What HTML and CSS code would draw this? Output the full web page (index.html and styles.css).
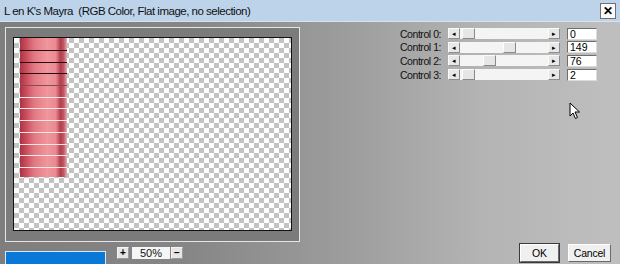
FILE: index.html
```html
<!DOCTYPE html>
<html lang="en">
<head>
    <meta charset="UTF-8">
    <title>L en K's Mayra</title>
    <link rel="stylesheet" href="styles.css">
</head>
<body>
    <div class="window">
        <div class="titlebar">
            <span class="title">L en K's Mayra&nbsp; (RGB Color, Flat image, no selection)</span>
            <span class="close">&#x2715;</span>
        </div>
        <div class="content">
            <div class="left">
                <div class="frame">
                    <div class="canvas">
                        <div class="tube">
                            <div class="band dark"></div>
                            <div class="band dark"></div>
                            <div class="band dark"></div>
                            <div class="band mid"></div>
                            <div class="band"></div>
                            <div class="band"></div>
                            <div class="band"></div>
                            <div class="band"></div>
                            <div class="band"></div>
                            <div class="band"></div>
                            <div class="band"></div>
                        </div>
                    </div>
                </div>
                <div class="bottom">
                    <div class="progress"></div>
                    <div class="zoom">
                        <span class="zbtn">+</span>
                        <span class="zval">50%</span>
                        <span class="zbtn">&minus;</span>
                    </div>
                </div>
            </div>
            <div class="right">
                <div class="controls">
                    <label>Control 0:</label>
                    <div class="scroll"><span class="arrow">&#9666;</span><span class="track"><span class="thumb" style="left: 2px"></span></span><span class="arrow">&#9656;</span></div>
                    <span class="field">0</span>

                    <label>Control 1:</label>
                    <div class="scroll"><span class="arrow">&#9666;</span><span class="track"><span class="thumb" style="left: 43px"></span></span><span class="arrow">&#9656;</span></div>
                    <span class="field">149</span>

                    <label>Control 2:</label>
                    <div class="scroll"><span class="arrow">&#9666;</span><span class="track"><span class="thumb" style="left: 23px"></span></span><span class="arrow">&#9656;</span></div>
                    <span class="field">76</span>

                    <label>Control 3:</label>
                    <div class="scroll"><span class="arrow">&#9666;</span><span class="track"><span class="thumb" style="left: 2px"></span></span><span class="arrow">&#9656;</span></div>
                    <span class="field">2</span>
                </div>
                <div class="buttons">
                    <button class="default">OK</button>
                    <button>Cancel</button>
                </div>
            </div>
            <svg class="cursor" width="12" height="18" viewBox="0 0 12 18">
                <path d="M1 1 L1 14 L4 11 L6.5 16.5 L8.5 15.5 L6 10 L10.5 10 Z" fill="#fff" stroke="#000" stroke-width="1"/>
            </svg>
        </div>
    </div>
</body>
</html>
```

FILE: styles.css
```css
body {
    margin: 0;
    padding: 0;
    font-family: "Liberation Sans", Arial, sans-serif;
    background: #a0a0a0;
}
.window {
    width: 620px;
    height: 264px;
    overflow: hidden;
    position: relative;
}
.titlebar {
    height: 22px;
    background: #bdd3ea;
    border-bottom: 1px solid #d6e4f2;
    box-sizing: border-box;
    display: flex;
    align-items: center;
    justify-content: space-between;
    padding: 0 4px 0 4px;
}
.title {
    font-size: 11.5px;
    color: #111;
    letter-spacing: -0.5px;
}
.close {
    width: 16px;
    height: 16px;
    box-sizing: border-box;
    border: 1px solid #707070;
    background: #fbfbfb;
    font-size: 12px;
    font-weight: bold;
    line-height: 14px;
    text-align: center;
    color: #000;
}
.content {
    height: 242px;
    display: grid;
    grid-template-columns: 300px 1fr;
    background: linear-gradient(to right, #7e7e7e 0%, #868686 30%, #9c9c9c 55%, #b4b4b4 78%, #bfbfbf 100%);
    position: relative;
}
.left {
    padding: 5px 0 0 5px;
}
.frame {
    width: 295px;
    height: 215px;
    box-sizing: border-box;
    border: 1px solid #e6e6e6;
    background: #7b7b7b;
    padding: 9px 7px 10px 7px;
}
.canvas {
    height: 194px;
    box-sizing: border-box;
    border: 1px solid #111;
    background-color: #fff;
    background-image:
        linear-gradient(45deg, #c3c3c3 25%, transparent 25%, transparent 75%, #c3c3c3 75%),
        linear-gradient(45deg, #c3c3c3 25%, transparent 25%, transparent 75%, #c3c3c3 75%);
    background-size: 10px 10px;
    background-position: 0 0, 5px 5px;
    padding-left: 6px;
}
.tube {
    width: 47px;
    height: 139px;
    background: linear-gradient(to right, #a83444 0%, #c84a5a 12%, #e27882 30%, #f0969c 58%, #ea8a92 76%, #b03e4c 86%, #c45662 93%, #e6b0b4 100%);
    display: flex;
    flex-direction: column;
    padding-top: 12px;
    box-sizing: border-box;
}
.band {
    height: 11.7px;
    flex: none;
    border-top: 1px solid #fbe6e6;
    box-sizing: border-box;
}
.band.dark {
    border-top: 1.5px solid #2a0a0e;
}
.band.mid {
    border-top-color: #8a4a50;
}
.bottom {
    display: flex;
    align-items: flex-start;
    margin-top: 5px;
}
.progress {
    width: 101px;
    height: 16px;
    margin-top: 4px;
    box-sizing: border-box;
    border: 1px solid #d8e8f8;
    background: #0a78d6;
}
.zoom {
    display: flex;
    margin-left: 11px;
    height: 12px;
}
.zbtn {
    width: 12px;
    height: 12px;
    background: #e6e6e6;
    border: 1px solid #f4f4f4;
    border-right-color: #9a9a9a;
    border-bottom-color: #9a9a9a;
    box-sizing: border-box;
    font-size: 10px;
    font-weight: bold;
    line-height: 10px;
    text-align: center;
    color: #000;
}
.zval {
    width: 38px;
    margin: 0 1px 0 3px;
    background: #f6f6f6;
    font-size: 11px;
    line-height: 12px;
    text-align: center;
    color: #111;
}
.right {
    display: flex;
    flex-direction: column;
    justify-content: space-between;
    align-items: flex-end;
}
.controls {
    display: grid;
    grid-template-columns: auto 112px 30px;
    grid-auto-rows: 11px;
    column-gap: 7px;
    row-gap: 2.7px;
    align-items: center;
    margin-top: 6px;
    margin-right: 23px;
}
.controls label {
    font-size: 10.5px;
    letter-spacing: -0.45px;
    color: #111;
    text-align: right;
}
.scroll {
    display: flex;
    height: 11px;
    background: #f2f2f2;
}
.arrow {
    width: 12px;
    height: 11px;
    box-sizing: border-box;
    background: #e8e8e8;
    border: 1px solid #fafafa;
    border-right-color: #8c8c8c;
    border-bottom-color: #8c8c8c;
    font-size: 7px;
    line-height: 9px;
    text-align: center;
    color: #000;
}
.track {
    flex: 1;
    position: relative;
    background: #f4f4f4;
}
.thumb {
    position: absolute;
    top: 0;
    width: 13px;
    height: 11px;
    box-sizing: border-box;
    background: #e6e6e6;
    border: 1px solid #fcfcfc;
    border-right-color: #8a8a8a;
    border-bottom-color: #8a8a8a;
}
.field {
    height: 12px;
    box-sizing: border-box;
    background: #fff;
    border: 1px solid #6e6e6e;
    border-right-color: #dcdcdc;
    border-bottom-color: #dcdcdc;
    font-size: 10.5px;
    line-height: 10px;
    padding-left: 2px;
    color: #000;
}
.buttons {
    display: flex;
    gap: 9px;
    margin: 0 9px 5px 0;
}
button {
    height: 18px;
    padding: 0;
    font-family: "Liberation Sans", Arial, sans-serif;
    font-size: 10.5px;
    letter-spacing: -0.2px;
    color: #000;
    background: #f0f0f0;
    border: 1px solid #fff;
    border-right-color: #6a6a6a;
    border-bottom-color: #6a6a6a;
    width: 43px;
}
button.default {
    width: 39px;
    outline: 1px solid #3a3a3a;
    outline-offset: 0;
}
.cursor {
    position: absolute;
    left: 569px;
    top: 80px;
}
```
